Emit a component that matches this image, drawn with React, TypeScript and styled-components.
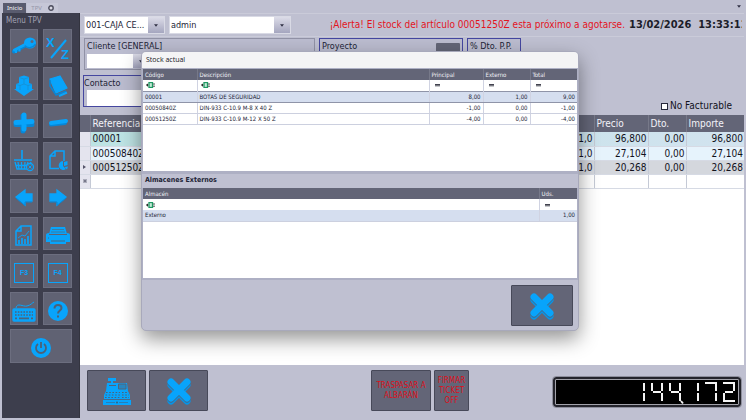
import React from "react";
import styled, { createGlobalStyle } from "styled-components";

const blue = "#08a4fb";
const navy = "#4547a0";
const slate = "#636577";

const GlobalStyle = createGlobalStyle`
  * { box-sizing: border-box; }
  body { margin: 0; background: #bfc0d1; }
  body, button, input, select, table {
    font-family: "DejaVu Sans Condensed", "Noto Sans", sans-serif;
    font-size: 10px;
    line-height: 14px;
    color: #222436;
  }
  button { cursor: pointer; }
`;

const Page = styled.div`
  position: relative;
  display: flex;
  flex-direction: column;
  min-height: 100vh;
  padding: 0 2px 2px;
  background: #bfc0d1;
  overflow: hidden;
`;

const TabBar = styled.nav`
  display: flex;
  align-items: flex-end;
  height: 13px;
  padding-right: 3px;
`;

const Tab = styled.button<{ $active?: boolean }>`
  display: flex;
  align-items: center;
  gap: 6px;
  height: 10px;
  margin-left: 1px;
  padding: 0 4px;
  border: 0;
  font-family: "Noto Sans", sans-serif;
  font-size: 6px;
  line-height: 10px;
  color: ${(p) => (p.$active ? "#fff" : "#9596a8")};
  background: ${(p) => (p.$active ? "#595b6e" : "#c6c7d7")};
`;

const TabMenu = styled.button`
  display: flex;
  margin-left: auto;
  padding: 0 0 5px;
  border: 0;
  background: none;
`;

const Body = styled.div`
  display: flex;
  flex: 1;
`;

const Sidebar = styled.aside`
  flex: none;
  width: 78px;
  padding: 1px 7px 0 8px;
  background: #3d3e4d;
  border-right: 1px solid #33343f;
`;

const SidebarTitle = styled.h2`
  margin: 0 -4px 1px;
  font-size: 8px;
  font-weight: 400;
  line-height: 14px;
  color: #a3a4b4;
`;

const ToolGrid = styled.div`
  display: grid;
  grid-template-columns: 28px 29px;
  grid-template-rows: repeat(4, 34px 33px) 34px;
  column-gap: 5px;
  row-gap: 4px;
`;

const Tool = styled.button<{ $wide?: boolean }>`
  display: flex;
  align-items: center;
  justify-content: center;
  grid-column: ${(p) => (p.$wide ? "span 2" : "auto")};
  padding: 4px 0 0;
  border: 1px solid #6c6e7f;
  background: #606273;
  color: ${blue};
`;

const Main = styled.main`
  display: flex;
  flex: 1;
  flex-direction: column;
  min-width: 0;
`;

const InfoBar = styled.header`
  display: flex;
  align-items: center;
  gap: 4px;
  height: 24px;
  padding-left: 4px;
  border-top: 1px solid #cacbd9;
  border-bottom: 1px solid #cacbd9;
`;

const Combo = styled.div<{ $width: number }>`
  display: flex;
  flex: none;
  position: relative;
  width: ${(p) => p.$width}px;
  height: 18px;
  border: 1px solid #d9dae5;
  background: #fff;
`;

const ComboSelect = styled.select`
  flex: 1;
  min-width: 0;
  padding: 0 16px 0 1px;
  border: 0;
  appearance: none;
  background: none;
  font-size: 9px;
`;

const ComboArrow = styled.span`
  position: absolute;
  right: 0;
  top: 0;
  bottom: 0;
  display: flex;
  align-items: center;
  justify-content: center;
  width: 16px;
  background: linear-gradient(#dcdce8, #a5a6bf);
  pointer-events: none;
`;

const Alert = styled.p`
  flex: 1;
  margin: 0;
  text-align: right;
  white-space: nowrap;
  color: #e3141e;
`;

const Clock = styled.div`
  flex: none;
  width: 113px;
  margin-right: 2px;
  overflow: hidden;
  white-space: pre;
  font-size: 11px;
  font-weight: 700;
  color: #1c1d29;
`;

const Fields = styled.div`
  display: flex;
  gap: 4px;
  padding: 1px 0 0 4px;
`;

const FieldBox = styled.div<{ $width: number; $plain?: boolean }>`
  flex: none;
  width: ${(p) => p.$width}px;
  height: 32px;
  padding: 0 2px;
  border: 1px solid ${(p) => (p.$plain ? "#9192a6" : navy)};
  background: #bbbccf;
`;

const FieldHead = styled.div`
  display: flex;
  align-items: flex-end;
  justify-content: space-between;
  height: 14px;
  font-size: 9px;
  white-space: nowrap;
`;

const FieldInput = styled.input<{ $width: number }>`
  display: block;
  width: ${(p) => p.$width}px;
  height: 14px;
  margin-top: 1px;
  padding: 0 2px;
  border: 0;
  background: #fff;
`;

const FieldLine = styled.div`
  display: flex;
`;

const SmallDrop = styled.button`
  display: flex;
  align-items: center;
  justify-content: center;
  width: 16px;
  height: 14px;
  margin-top: 1px;
  padding: 0;
  border: 0;
  background: linear-gradient(#dcdce8, #a5a6bf);
`;

const SearchButton = styled.button`
  width: 24px;
  height: 10px;
  padding: 0;
  border: 0;
  border-radius: 1px;
  background: ${slate};
`;

const SecondLine = styled.div`
  display: flex;
  align-items: flex-end;
  justify-content: space-between;
  height: 45px;
  padding: 0 12px 2px 3px;
`;

const ContactBox = styled(FieldBox)`
  align-self: flex-start;
  margin-top: 5px;
  padding: 0 2px 0 0;
`;

const ContactInput = styled(FieldInput)`
  margin: 0 0 0 3px;
  height: 16px;
`;

const CheckLabel = styled.label`
  display: flex;
  align-items: center;
  gap: 2px;
  color: #11121c;
`;

const Check = styled.input`
  appearance: none;
  width: 7px;
  height: 7px;
  margin: 0;
  border: 1px solid #26273a;
  background: #fff;
`;

const Lines = styled.section`
  flex: 1;
  background: #fff;
`;

const LineTable = styled.table`
  width: 100%;
  table-layout: fixed;
  border-collapse: collapse;
  th {
    height: 17px;
    padding: 0 2px;
    text-align: left;
    font-weight: 400;
    color: #f3f3f8;
    background: ${slate};
    border-right: 1px solid #777989;
    white-space: nowrap;
  }
  td {
    height: 14px;
    padding: 0 1px 0 2px;
    line-height: 13px;
    border-right: 1px solid #c5cad6;
    border-bottom: 1px solid #d6dae4;
    color: #11121c;
    white-space: nowrap;
  }
  th:last-child, td:last-child { border-right: 0; }
`;

const LineRow = styled.tr<{ $bg: string }>`
  background: ${(p) => p.$bg};
`;

const Marker = styled.td`
  background: #e4e4ee;
  && { padding: 0; text-align: center; }
  svg { display: block; margin: 0 auto; }
`;

const Amount = styled.td`
  text-align: right;
`;

const Footer = styled.footer`
  display: flex;
  align-items: center;
  height: 53px;
  padding: 0 3px 2px 7px;
`;

const FootGroup = styled.div`
  display: flex;
  gap: 3px;
`;

const FootButton = styled.button<{ $width: number }>`
  display: flex;
  align-items: center;
  justify-content: center;
  width: ${(p) => p.$width}px;
  height: 41px;
  padding: 0;
  border: 1px solid #474959;
  border-radius: 1px;
  background: ${slate};
  font-size: 8px;
  line-height: 10px;
  color: #dc0f1a;
`;

const MiddleGroup = styled(FootGroup)`
  margin: 0 auto 0 163px;
`;

const Display = styled.output`
  display: flex;
  align-items: center;
  justify-content: flex-end;
  gap: 5px;
  width: 188px;
  height: 30px;
  margin-top: 3px;
  padding-right: 4px;
  border: 2px solid #24242c;
  border-radius: 3px;
  outline: 1px solid #8d8e9c;
  box-shadow: inset 0 0 0 1px #a2a2aa;
  background: #000;
`;

const Overlay = styled.div`
  position: absolute;
  inset: 0;
  display: flex;
  align-items: flex-start;
  padding: 51px 167px 0 141px;
  pointer-events: none;
`;

const Dialog = styled.section`
  flex: 1;
  min-width: 0;
  border: 1px solid #a8a9bb;
  border-radius: 5px;
  overflow: hidden;
  background: #bfc0d1;
  box-shadow: 0 8px 20px rgba(0, 0, 0, 0.42);
  pointer-events: auto;
`;

const DialogTitle = styled.h1`
  height: 16px;
  margin: 0;
  padding-left: 4px;
  background: #f4f4f5;
  font-family: "Open Sans", "Noto Sans", sans-serif;
  font-size: 7px;
  font-weight: 400;
  line-height: 15px;
  color: #15151c;
`;

const Pane = styled.div<{ $height: number }>`
  height: ${(p) => p.$height}px;
  margin: 0 1px;
  background: #fff;
`;

const DialogBody = styled.div`
  padding-top: 1px;
  background: #aeb0c4;
`;

const SubTitle = styled.h2`
  height: 14px;
  margin: 3px 0 0;
  padding: 0 3px;
  background: #bfc0d1;
  font-size: 7px;
  font-weight: 700;
  line-height: 13px;
`;

const StockTable = styled.table`
  width: 100%;
  table-layout: fixed;
  border-collapse: collapse;
  font-size: 6px;
  line-height: 8px;
  th {
    height: 11px;
    padding: 0 2px;
    text-align: left;
    font-weight: 400;
    color: #f0f0f6;
    background: ${slate};
    border-right: 1px solid #777989;
  }
  td {
    height: 11px;
    padding: 0 2px;
    border-right: 1px solid #d0d3e2;
    white-space: nowrap;
  }
  th:last-child, td:last-child { border-right: 0; }
`;

const StockRow = styled.tr<{ $selected?: boolean; $focused?: boolean }>`
  background: ${(p) => (p.$selected ? "#d5deef" : "#fff")};
  td {
    border-top: ${(p) => (p.$focused ? "1px solid #8f94a8" : "0")};
    border-bottom: 1px solid ${(p) => (p.$focused ? "#8f94a8" : "#ccd0df")};
  }
`;

const FilterCell = styled.td`
  && { padding-left: 3px; }
  svg { display: block; }
`;

const DialogFooter = styled.div`
  display: flex;
  justify-content: flex-end;
  padding: 5px 5px 4px;
  border-top: 2px solid #aeb0c4;
`;

function DownArrow() {
  return (
    <svg width="4" height="3" viewBox="0 0 5 3" aria-hidden="true">
      <path d="M0 0H5L2.5 3Z" fill="#303145" />
    </svg>
  );
}

function TextFilter() {
  return (
    <svg width="9" height="6" viewBox="0 0 9 6" aria-hidden="true">
      <path d="M0 3H2.2M1.6 1.8V4.4M7.2 2H8.8M7.2 4.2H8.8" stroke="#222" />
      <rect x="3" y=".5" width="3.5" height="5" fill="#c4ecd7" stroke="#219763" strokeWidth="1.3" />
    </svg>
  );
}

function EqualFilter() {
  return (
    <svg width="7" height="6" viewBox="0 0 7 6" aria-hidden="true">
      <path d="M2 2.5H7M2 3.8H7" stroke="#42434f" />
    </svg>
  );
}

function Cross() {
  return (
    <svg width="26" height="30" viewBox="0 0 26 30" aria-hidden="true">
      <path d="M5 9L21 25M21 9L5 25" stroke="#0695e8" strokeWidth="7" strokeLinecap="round" />
      <path d="M5 7L21 23M21 7L5 23" stroke="#4c6580" strokeWidth="7" strokeLinecap="round" />
      <path d="M5 6L21 22M21 6L5 22" stroke={blue} strokeWidth="7" strokeLinecap="round" />
    </svg>
  );
}

function Register() {
  return (
    <svg width="28" height="28" viewBox="0 0 28 28" fill={blue} aria-hidden="true">
      <path d="M5 1H13V4H10V6H24L25 14L27 18V22H1V18L3 14L4 6H8V4H5Z" />
      <path d="M0 23H28V28H0Z" />
      <path d="M15.5 7H23V12H15.5Z" stroke="#50647b" fill="#2985bd" />
      <path d="M6 8.5H13" stroke="#50647b" />
      <path d="M3 15.5H17M19 15.5H25M2.5 18H17M19 18H26M2 20.5H17M19 20.5H26" stroke="#4d6178" strokeWidth="1" strokeDasharray="1.6 1.6" />
      <path d="M1 22.5H27M3 25.5H12M16 25.5H25" stroke="#356f99" strokeWidth=".7" />
      <circle cx="14" cy="25.5" r="1" fill="#38617f" />
    </svg>
  );
}

function Icon({ children }: { children: React.ReactNode }) {
  return (
    <svg width="24" height="24" viewBox="0 0 24 24" fill="none" stroke={blue} strokeWidth="1.3" aria-hidden="true">
      {children}
    </svg>
  );
}

const Fkey = styled.span`
  display: flex;
  align-items: center;
  justify-content: center;
  width: 20px;
  height: 20px;
  border: 1px solid ${blue};
  font-family: "Liberation Sans", sans-serif;
  font-size: 7px;
  font-weight: 700;
  color: ${blue};
`;

const tools: { label: string; wide?: boolean; icon: React.ReactNode }[] = [
  {
    label: "Abrir cajón",
    icon: (
      <Icon>
        <path d="M15 8.5L2 15.5" stroke="#0786d6" strokeWidth="4" strokeLinecap="round" />
        <path d="M15 7.5L2.5 14" strokeWidth="3" strokeLinecap="round" />
        <path d="M4 14V17M7.5 13V15.5" strokeWidth="2" />
        <ellipse cx="18" cy="7" rx="6" ry="5.5" fill={blue} stroke="none" />
        <path d="M13 9.5C15 13 21 12 23.5 8" stroke="#0786d6" />
        <circle cx="20" cy="5.5" r="1.5" fill="#596982" stroke="none" />
      </Icon>
    ),
  },
  {
    label: "Informe X/Z",
    icon: (
      <Icon>
        <path d="M20 4L5 22" strokeWidth="2" />
        <text x="0" y="11" fill={blue} stroke="none" fontFamily="Liberation Sans, sans-serif" fontWeight="700" fontSize="13">X</text>
        <text x="15" y="23" fill={blue} stroke="none" fontFamily="Liberation Sans, sans-serif" fontWeight="700" fontSize="13">Z</text>
      </Icon>
    ),
  },
  {
    label: "Entrada de artículos",
    icon: (
      <Icon>
        <path d="M7 3L12 1.5L17 3V9L20 10V15H22L12 22L2 15H4V10L7 9Z" fill={blue} stroke="none" />
        <path d="M7 3.5L12 5L17 3.5M12 5V10M4 10.5L8 11.5L12 10L16 11.5L20 10.5M8 11.5V16M16 11.5V16" stroke="#1b8cca" strokeWidth=".7" />
      </Icon>
    ),
  },
  {
    label: "Vaciar",
    icon: (
      <Icon>
        <path d="M4 5L14 2L21 14L10 19Z" fill={blue} strokeLinejoin="round" />
        <path d="M4 6V12L10 21L20 17" stroke="#0786d6" strokeWidth="1.5" />
        <path d="M13 22L21 18.5" strokeWidth="2.2" />
      </Icon>
    ),
  },
  {
    label: "Añadir",
    icon: (
      <Icon>
        <path d="M11 5V20M4 13.5H20" stroke="#0786d6" strokeWidth="5" strokeLinecap="round" />
        <path d="M12 4V18M4 11.5L20 10.5" strokeWidth="5" strokeLinecap="round" />
      </Icon>
    ),
  },
  {
    label: "Quitar",
    icon: (
      <Icon>
        <path d="M5 13.5L19 12" stroke="#0786d6" strokeWidth="4" strokeLinecap="round" />
        <path d="M5 12L20 10" strokeWidth="4" strokeLinecap="round" />
      </Icon>
    ),
  },
  {
    label: "Anular cesta",
    icon: (
      <Icon>
        <path d="M10 1V10M2 11H20" strokeWidth="1.6" />
        <path d="M3 13L5 20H15M19 13L18 15M6 13L7 20M9.5 13V20M13 13L12.5 20M16 13L15 16M4 16.5H15" />
        <circle cx="18" cy="18" r="3.5" />
        <path d="M16.5 16.5L19.5 19.5M19.5 16.5L16.5 19.5" strokeWidth="1" />
      </Icon>
    ),
  },
  {
    label: "Informe de ventas",
    icon: (
      <Icon>
        <path d="M13 19.5H4V7L9 2H18V12M9 2V7H4" strokeWidth="1.5" />
        <path d="M17 12A4.5 4.5 0 1 0 20 20L17 17Z" fill={blue} stroke="none" />
        <path d="M18 13L21.5 12V16L18 17Z" fill={blue} stroke="none" />
        <path d="M18.5 18L22 17.5L21 20.5Z" fill={blue} stroke="none" />
      </Icon>
    ),
  },
  {
    label: "Anterior",
    icon: (
      <Icon>
        <path d="M4 11L13 4V8H20V15H13V19Z" fill={blue} />
        <path d="M4 12L13 19.5V16H20" stroke="#0786d6" strokeWidth="1" />
      </Icon>
    ),
  },
  {
    label: "Siguiente",
    icon: (
      <Icon>
        <path d="M20 11L11 4V8H4V15H11V19Z" fill={blue} />
        <path d="M20 12L11 19.5V16H4" stroke="#0786d6" strokeWidth="1" />
      </Icon>
    ),
  },
  {
    label: "Estadísticas",
    icon: (
      <Icon>
        <path d="M9 2H19V21H4V7ZM9 2V7H4" strokeWidth="1.5" />
        <path d="M7 20V16M10 20V14M13 20V15M16 20V12" strokeWidth="1.7" />
        <path d="M6 14L10 11L13 12L17 7" strokeWidth=".9" />
      </Icon>
    ),
  },
  {
    label: "Imprimir",
    icon: (
      <Icon>
        <path d="M5 3H19L21 10H3Z" fill={blue} stroke="none" />
        <path d="M6 5.5H18M5 8H19" stroke="#47728f" strokeWidth=".8" />
        <path d="M0 11Q0 9 3 9V11H21V9Q24 9 24 11V18H20V20H4V18H0Z" fill={blue} stroke="none" />
        <path d="M5 17H19M2 14H3" stroke="#47667e" strokeWidth="1.2" />
      </Icon>
    ),
  },
  { label: "F3", icon: <Fkey>F3</Fkey> },
  { label: "F4", icon: <Fkey>F4</Fkey> },
  {
    label: "Teclado",
    icon: (
      <Icon>
        <path d="M4 9C5 3 11 8 15 7S20 4 22 3" strokeWidth="1" />
        <rect x="1" y="10" width="22" height="12" rx="1" fill={blue} />
        <path d="M3 13H21M3 16H21" stroke="#4b647c" strokeWidth="1.7" strokeDasharray="1.6 1.2" />
        <path d="M3 19.3H5M7 19.3H17M19 19.3H21" stroke="#4b647c" strokeWidth="1.7" />
      </Icon>
    ),
  },
  {
    label: "Ayuda",
    icon: (
      <Icon>
        <circle cx="12" cy="12" r="10" fill={blue} stroke="none" />
        <path d="M8.5 9.5C8.5 4.5 15.5 5 15.5 9C15.5 11.5 12 11.5 12 14.5M12 16.5V18.5" stroke="#4d6177" strokeWidth="2" />
      </Icon>
    ),
  },
  {
    label: "Salir",
    wide: true,
    icon: (
      <Icon>
        <circle cx="12" cy="12" r="10" fill={blue} stroke="none" />
        <path d="M9 8A5 5 0 1 0 15 8M12 6V12" stroke="#4d6177" strokeWidth="1.8" />
      </Icon>
    ),
  },
];

const segmentPaths: Record<string, string> = {
  a: "M1 1H13",
  b: "M12 1V9",
  c: "M12 11V19",
  d: "M1 19H13",
  e: "M2 11V19",
  f: "M2 1V9",
  g: "M3 10H11",
};

const litSegments: Record<string, string> = {
  "0": "abcdef",
  "1": "bc",
  "2": "abged",
  "3": "abgcd",
  "4": "fgbc",
  "5": "afgcd",
  "6": "afgedc",
  "7": "abc",
  "8": "abcdefg",
  "9": "abcdfg",
};

function Segments({ value }: { value: string }) {
  const digits = value.match(/\d,?/g) ?? [];
  return (
    <>
      {digits.map((d, i) => (
        <svg key={i} width="13" height="20" viewBox="0 0 13 20" overflow="visible" stroke="#f4f4f4" strokeWidth="2" aria-hidden="true">
          {litSegments[d[0]].split("").map((s) => (
            <path key={s} d={segmentPaths[s]} />
          ))}
          {d.length > 1 && <path d="M13 19L15 21.5" />}
        </svg>
      ))}
    </>
  );
}

const lines = [
  { ref: "00001", price: "96,800", bg: "linear-gradient(90deg, #bce3e3, #d2e3ef)" },
  { ref: "00050840Z", price: "27,104", bg: "#e6f3fc" },
  { ref: "00051250Z", price: "20,268", bg: "#d4d7dd" },
];

const stock = [
  ["00001", "BOTAS DE SEGURIDAD", "8,00", "1,00", "9,00"],
  ["00050840Z", "DIN-933 C-10.9 M-8 X 40 Z", "-1,00", "0,00", "-1,00"],
  ["00051250Z", "DIN-933 C-10.9 M-12 X 50 Z", "-4,00", "0,00", "-4,00"],
];

export default function App() {
  return (
    <Page>
      <GlobalStyle />
      <TabBar>
        <Tab $active>Inicio</Tab>
        <Tab>
          TPV
          <svg width="6" height="6" viewBox="0 0 6 6" aria-hidden="true">
            <circle cx="3" cy="3" r="2.2" fill="#d8d8e2" stroke="#4b4c5c" strokeWidth="1.4" />
          </svg>
        </Tab>
        <TabMenu aria-label="Pestañas"><DownArrow /></TabMenu>
      </TabBar>
      <Body>
        <Sidebar>
          <SidebarTitle>Menu TPV</SidebarTitle>
          <ToolGrid>
            {tools.map((t) => (
              <Tool key={t.label} aria-label={t.label} $wide={t.wide}>{t.icon}</Tool>
            ))}
          </ToolGrid>
        </Sidebar>
        <Main>
          <InfoBar>
            <Combo $width={81}>
              <ComboSelect aria-label="Caja"><option>001-CAJA CE...</option></ComboSelect>
              <ComboArrow><DownArrow /></ComboArrow>
            </Combo>
            <Combo $width={122}>
              <ComboSelect aria-label="Usuario"><option>admin</option></ComboSelect>
              <ComboArrow><DownArrow /></ComboArrow>
            </Combo>
            <Alert role="alert">¡Alerta! El stock del artículo 00051250Z esta próximo a agotarse.</Alert>
            <Clock>13/02/2026  13:33:11</Clock>
          </InfoBar>
          <Fields>
            <FieldBox $width={231} $plain>
              <FieldHead><label htmlFor="cliente">Cliente [GENERAL]</label></FieldHead>
              <FieldLine>
                <FieldInput id="cliente" $width={46} />
                <SmallDrop aria-label="Elegir cliente"><DownArrow /></SmallDrop>
              </FieldLine>
            </FieldBox>
            <FieldBox $width={144}>
              <FieldHead>
                <label htmlFor="proyecto">Proyecto</label>
                <SearchButton aria-label="Buscar proyecto" />
              </FieldHead>
              <FieldInput id="proyecto" $width={138} />
            </FieldBox>
            <FieldBox $width={54}>
              <FieldHead><label htmlFor="dto">% Dto. P.P.</label></FieldHead>
              <FieldInput id="dto" $width={48} />
            </FieldBox>
          </Fields>
          <SecondLine>
            <ContactBox $width={232}>
              <FieldHead><label htmlFor="contacto">Contacto</label></FieldHead>
              <ContactInput id="contacto" $width={220} />
            </ContactBox>
            <CheckLabel><Check type="checkbox" />No Facturable</CheckLabel>
          </SecondLine>
          <Lines>
            <LineTable>
              <colgroup>
                <col width="10" /><col width="60" /><col /><col width="40" />
                <col width="54" /><col width="38" /><col width="58" />
              </colgroup>
              <thead>
                <tr><th /><th>Referencia</th><th /><th /><th>Precio</th><th>Dto.</th><th>Importe</th></tr>
              </thead>
              <tbody>
                {lines.map((l, i) => (
                  <LineRow key={l.ref} $bg={l.bg}>
                    <Marker>
                      {i === 2 && (
                        <svg width="3" height="4" viewBox="0 0 3 4" aria-hidden="true"><path d="M0 0L3 2L0 4Z" fill="#55566a" /></svg>
                      )}
                    </Marker>
                    <td>{l.ref}</td>
                    <td />
                    <Amount>1,0</Amount>
                    <Amount>{l.price}</Amount>
                    <Amount>0,00</Amount>
                    <Amount>{l.price}</Amount>
                  </LineRow>
                ))}
                <LineRow $bg="#fff">
                  <Marker>
                    <svg width="4" height="4" viewBox="0 0 4 4" aria-hidden="true"><path d="M2 0V4M0 2H4M.5 .5L3.5 3.5M3.5 .5L.5 3.5" stroke="#77788a" /></svg>
                  </Marker>
                  <td /><td /><td /><td /><td /><td />
                </LineRow>
              </tbody>
            </LineTable>
          </Lines>
          <Footer>
            <FootGroup>
              <FootButton $width={59} aria-label="Cobrar"><Register /></FootButton>
              <FootButton $width={59} aria-label="Cancelar"><Cross /></FootButton>
            </FootGroup>
            <MiddleGroup>
              <FootButton $width={60}>TRASPASAR A ALBARÁN</FootButton>
              <FootButton $width={35}>FIRMAR TICKET OFF</FootButton>
            </MiddleGroup>
            <Display aria-label="144,172"><Segments value="144,172" /></Display>
          </Footer>
        </Main>
      </Body>
      <Overlay>
        <Dialog role="dialog" aria-labelledby="stock-title">
          <DialogTitle id="stock-title">Stock actual</DialogTitle>
          <DialogBody>
            <Pane $height={102}>
              <StockTable>
                <colgroup>
                  <col width="54" /><col /><col width="54" /><col width="47" /><col width="47" />
                </colgroup>
                <thead>
                  <tr><th>Código</th><th>Descripción</th><th>Principal</th><th>Externo</th><th>Total</th></tr>
                </thead>
                <tbody>
                  <tr>
                    <FilterCell><TextFilter /></FilterCell>
                    <FilterCell><TextFilter /></FilterCell>
                    <FilterCell><EqualFilter /></FilterCell>
                    <FilterCell><EqualFilter /></FilterCell>
                    <FilterCell><EqualFilter /></FilterCell>
                  </tr>
                  {stock.map((r, i) => (
                    <StockRow key={r[0]} $selected={i === 0} $focused={i === 0}>
                      <td>{r[0]}</td>
                      <td>{r[1]}</td>
                      <Amount>{r[2]}</Amount>
                      <Amount>{r[3]}</Amount>
                      <Amount>{r[4]}</Amount>
                    </StockRow>
                  ))}
                </tbody>
              </StockTable>
            </Pane>
            <SubTitle>Almacenes Externos</SubTitle>
            <Pane $height={90}>
              <StockTable>
                <colgroup><col /><col width="38" /></colgroup>
                <thead><tr><th>Almacén</th><th>Uds.</th></tr></thead>
                <tbody>
                  <tr>
                    <FilterCell><TextFilter /></FilterCell>
                    <FilterCell><EqualFilter /></FilterCell>
                  </tr>
                  <StockRow $selected><td>Externo</td><Amount>1,00</Amount></StockRow>
                </tbody>
              </StockTable>
            </Pane>
          </DialogBody>
          <DialogFooter>
            <FootButton $width={62} aria-label="Cerrar"><Cross /></FootButton>
          </DialogFooter>
        </Dialog>
      </Overlay>
    </Page>
  );
}
